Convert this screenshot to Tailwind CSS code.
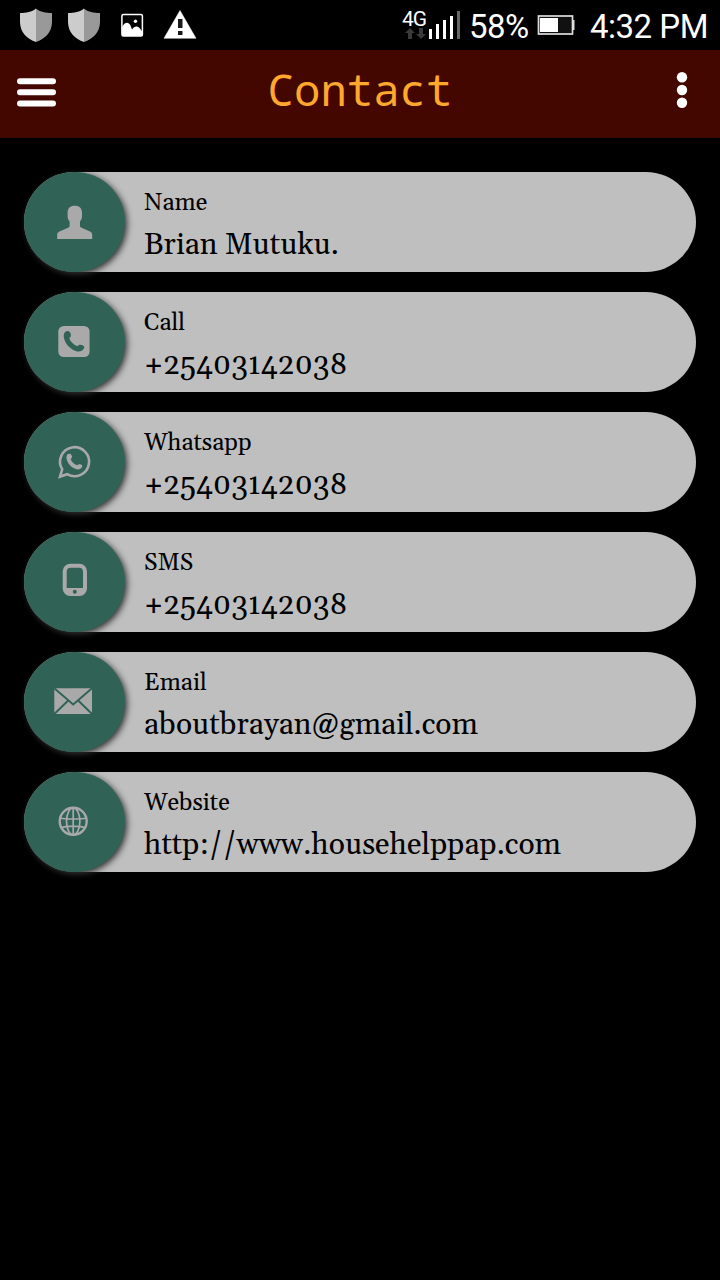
<!DOCTYPE html>
<html lang="en">
<head>
<meta charset="utf-8">
<title>Contact</title>
<script src="https://cdn.jsdelivr.net/npm/@tailwindcss/browser@4"></script>
</head>
<body class="bg-black w-[720px] h-[1280px] overflow-hidden">
<div class="h-[50px] flex items-center text-white font-[Roboto,sans-serif] text-[33px] leading-[48px] tracking-[-0.5px]">
  <svg class="w-[200px] h-[50px] shrink-0" viewBox="0 0 200 50">
    <g id="shield"><path d="M36 8.5C32 12 26 13 20 13v9c0 10 7 17 16 20z" fill="#ccc"/><path d="M36 8.500C40 12 46 13 52 13v9c0 10-7 17-16 20z" fill="#999"/></g>
    <use href="#shield" x="48"/>
    <rect x="121.900" y="14.500" width="20.500" height="21.500" rx="1.500" fill="none" stroke="#fff" stroke-width="1.500"/>
    <path d="M122 27.500c2-5.500 6.500-6.500 8.500-2l1.500 4c2-3 5-4 7.500-1.500l3 4v4h-20.500z" fill="#fff"/><circle cx="135.500" cy="21.300" r="1.700" fill="#fff"/>
    <path d="M180 10.500 196 38.300H164z" fill="#fff" stroke="#fff" stroke-width=".5" stroke-linejoin="round"/><path d="M178 19h4.500v9H178zM178 31h4.500v4H178z" fill="#1a1a1a"/>
  </svg>
  <div class="relative ml-[202px] w-[60px] h-[50px] shrink-0">
    <span class="absolute left-0 top-[9px] text-[21px] leading-[20px] tracking-[-1px]">4G</span>
    <svg class="w-[60px] h-[50px]" viewBox="402 0 60 50"><path d="M410 28l-5 5h3v6h4v-6h3zM421 39l-5-5h3v-6h4v6h3z" fill="#3a3a3a"/><path d="M430.500 29v10M437.500 24v15M444.500 20v19M451.500 16v23" stroke="#fff" stroke-width="3"/><path d="M458.500 11v28" stroke="#666" stroke-width="3"/></svg>
  </div>
  <span class="ml-[7px] w-[68px] shrink-0 whitespace-nowrap pt-[4px]">58%</span>
  <svg class="w-[38px] h-[50px] shrink-0" viewBox="537 0 38 50"><rect x="538.500" y="16" width="34" height="18" fill="#111" stroke="#ddd" stroke-width="1.700"/><path d="M540 18h18v14h-18z" fill="#fff"/><path d="M572.500 20h2v10h-2z" fill="#ddd"/></svg>
  <span class="ml-[15px] whitespace-nowrap pt-[4px]">4:32 PM</span>
</div>
<header class="h-[88px] bg-[#430700] flex items-center justify-between">
  <svg class="w-[72px] h-[88px]" viewBox="0 50 72 88"><path d="M20 81.300h33M20 92.300h33M20 103.500h33" stroke="#fff" stroke-width="6" stroke-linecap="round"/></svg>
  <h1 class="font-['Droid_Sans_Mono','Noto_Sans_Mono','DejaVu_Sans_Mono',monospace] text-[44px] leading-[78px] text-[#ffa82e] pb-[10px]">Contact</h1>
  <svg class="w-[72px] h-[88px]" viewBox="648 50 72 88" fill="#fff"><circle cx="682" cy="77.200" r="5.200"/><circle cx="682" cy="90" r="5.200"/><circle cx="682" cy="102.700" r="5.200"/></svg>
</header>
<main class="px-6 pt-[34px] flex flex-col gap-5 font-[Georgia,Gelasio,'Liberation_Serif',serif] text-black">
  <section class="h-[100px] rounded-full bg-[#bfbfbf] flex">
    <div class="w-[101px] rounded-full bg-[#306256] shadow-[2px_2px_6px_#333] shrink-0"><svg class="w-[101px] h-[100px]" viewBox="0 0 101 100" fill="#a9a9a9"><path d="M50.800 33.700c4.600 0 7.200 2.600 7.200 6.800v3.500c0 2.500-.8 4-2 5.500v4.200c0 1 .5 1.500 1.500 2l8.500 3.800c1.500.8 2.200 1.700 2.200 3.300v4.200h-35v-4.200c0-1.600.7-2.500 2.200-3.300l8.700-3.800c1-.5 1.500-1 1.500-2v-4.200c-1.200-1.500-2-3-2-5.500v-3.500c0-4.200 2.600-6.800 7.200-6.800z"/></svg></div>
    <div class="pl-[19px] pt-[14px] whitespace-nowrap"><div class="text-[24px] leading-[34px]">Name</div><div class="text-[30px] leading-[50px]">Brian Mutuku.</div></div>
  </section>
  <section class="h-[100px] rounded-full bg-[#bfbfbf] flex">
    <div class="w-[101px] rounded-full bg-[#306256] shadow-[2px_2px_6px_#333] shrink-0"><svg class="w-[101px] h-[100px]" viewBox="0 0 101 100" fill="#a9a9a9"><rect x="34.300" y="34" width="31.300" height="31" rx="5.500"/><path d="M42.500 39.200c2-.6 3.700.5 4.300 3 .4 2-.4 2.800-1.600 4 1.500 3.800 4.500 6.500 8.300 8 1.700-1.800 3-1.800 5-1 2 .9 2.200 1.900 1.200 3.600-1.800 3-5 3.400-8.700 1.900-6-2.500-10.300-8-11.200-13.500-.4-3 .5-5.300 2.700-6z" fill="#306256"/></svg></div>
    <div class="pl-[19px] pt-[14px] whitespace-nowrap"><div class="text-[24px] leading-[34px]">Call</div><div class="text-[30px] leading-[50px]">+25403142038</div></div>
  </section>
  <section class="h-[100px] rounded-full bg-[#bfbfbf] flex">
    <div class="w-[101px] rounded-full bg-[#306256] shadow-[2px_2px_6px_#333] shrink-0"><svg class="w-[101px] h-[100px]" viewBox="0 0 101 100" fill="#a9a9a9"><path d="M38.200 57.300A14.500 14.500 0 1 1 43.200 62.200L36 64.600Z" fill="none" stroke="#a9a9a9" stroke-width="2.600"/><path d="M42.500 39.200c2-.6 3.700.5 4.300 3 .4 2-.4 2.800-1.600 4 1.500 3.800 4.500 6.500 8.300 8 1.700-1.800 3-1.800 5-1 2 .9 2.200 1.900 1.200 3.600-1.800 3-5 3.400-8.700 1.900-6-2.500-10.300-8-11.200-13.500-.4-3 .5-5.300 2.700-6z" transform="translate(11.900 11.600) scale(.77)"/></svg></div>
    <div class="pl-[19px] pt-[14px] whitespace-nowrap"><div class="text-[24px] leading-[34px]">Whatsapp</div><div class="text-[30px] leading-[50px]">+25403142038</div></div>
  </section>
  <section class="h-[100px] rounded-full bg-[#bfbfbf] flex">
    <div class="w-[101px] rounded-full bg-[#306256] shadow-[2px_2px_6px_#333] shrink-0"><svg class="w-[101px] h-[100px]" viewBox="0 0 101 100"><rect x="38.700" y="31.700" width="24.300" height="32.300" rx="7.500" fill="#a9a9a9"/><path d="M42.700 39.700q0-4 4-4h8.300q4 0 4 4V56H42.700z" fill="#306256"/><circle cx="50.800" cy="59.800" r="2" fill="#306256"/></svg></div>
    <div class="pl-[19px] pt-[14px] whitespace-nowrap"><div class="text-[24px] leading-[34px]">SMS</div><div class="text-[30px] leading-[50px]">+25403142038</div></div>
  </section>
  <section class="h-[100px] rounded-full bg-[#bfbfbf] flex">
    <div class="w-[101px] rounded-full bg-[#306256] shadow-[2px_2px_6px_#333] shrink-0"><svg class="w-[101px] h-[100px]" viewBox="0 0 101 100"><path d="M30.300 36.200H68V62H30.300z" fill="#a9a9a9"/><path d="M30.300 36.200 49.200 52.500 68 36.200M30.300 62 44.200 48.500M68 62 54.200 48.500" fill="none" stroke="#306256" stroke-width="1.900"/></svg></div>
    <div class="pl-[19px] pt-[14px] whitespace-nowrap"><div class="text-[24px] leading-[34px]">Email</div><div class="text-[30px] leading-[50px]">aboutbrayan@gmail.com</div></div>
  </section>
  <section class="h-[100px] rounded-full bg-[#bfbfbf] flex">
    <div class="w-[101px] rounded-full bg-[#306256] shadow-[2px_2px_6px_#333] shrink-0"><svg class="w-[101px] h-[100px]" viewBox="0 0 101 100" fill="none" stroke="#a9a9a9" stroke-width="1.700"><circle cx="49.200" cy="49.300" r="13.500" stroke-width="2.400"/><ellipse cx="49.200" cy="49.300" rx="6.700" ry="13.500"/><path d="M49.200 36v27M36 46q4 1 13.200 1T62.400 46M37.500 56q3-1.800 11.700-1.800T60.900 56"/></svg></div>
    <div class="pl-[19px] pt-[14px] whitespace-nowrap"><div class="text-[24px] leading-[34px]">Website</div><div class="text-[30px] leading-[50px]">http://www.househelppap.com</div></div>
  </section>
</main>
</body>
</html>
